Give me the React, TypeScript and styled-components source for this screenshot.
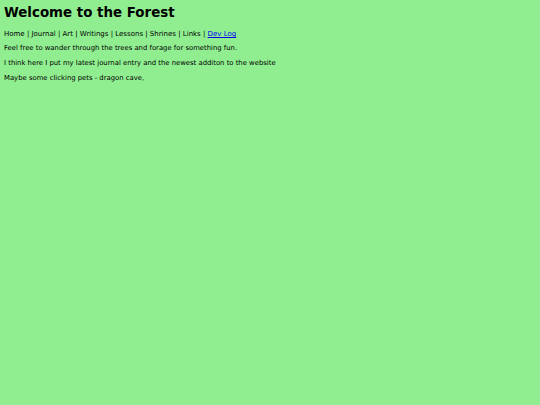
import { createGlobalStyle, styled } from 'styled-components';

const GlobalStyle = createGlobalStyle`
  body {
    margin: 0;
    background: #90ee90;
    font-family: "DejaVu Sans", Verdana, sans-serif;
    color: #000;
  }
`;

const Page = styled.div`
  padding: 5px 4px 4px;
`;

const Title = styled.h1`
  font-size: 13.4px;
  font-weight: bold;
  margin: 0 0 9px 0;
  line-height: 16px;
`;

const Nav = styled.nav`
  font-size: 7px;
  line-height: 9px;
  margin-bottom: 5px;
`;

const NavLink = styled.a<{ $link?: boolean }>`
  color: ${(p) => (p.$link ? '#0000ee' : 'inherit')};
  text-decoration: ${(p) => (p.$link ? 'underline' : 'none')};
`;

const Text = styled.p`
  font-size: 6.85px;
  line-height: 9px;
  margin: 0 0 6px 0;
`;

const links = ['Home', 'Journal', 'Art', 'Writings', 'Lessons', 'Shrines', 'Links'];

export default function App() {
  return (
    <>
      <GlobalStyle />
      <Page>
        <Title>Welcome to the Forest</Title>
        <Nav>
          {links.map((l) => (
            <span key={l}>
              <NavLink>{l}</NavLink> |{' '}
            </span>
          ))}
          <NavLink $link href="#">Dev Log</NavLink>
        </Nav>
        <Text>Feel free to wander through the trees and forage for something fun.</Text>
        <Text>I think here I put my latest journal entry and the newest additon to the website</Text>
        <Text>Maybe some clicking pets - dragon cave,</Text>
      </Page>
    </>
  );
}
